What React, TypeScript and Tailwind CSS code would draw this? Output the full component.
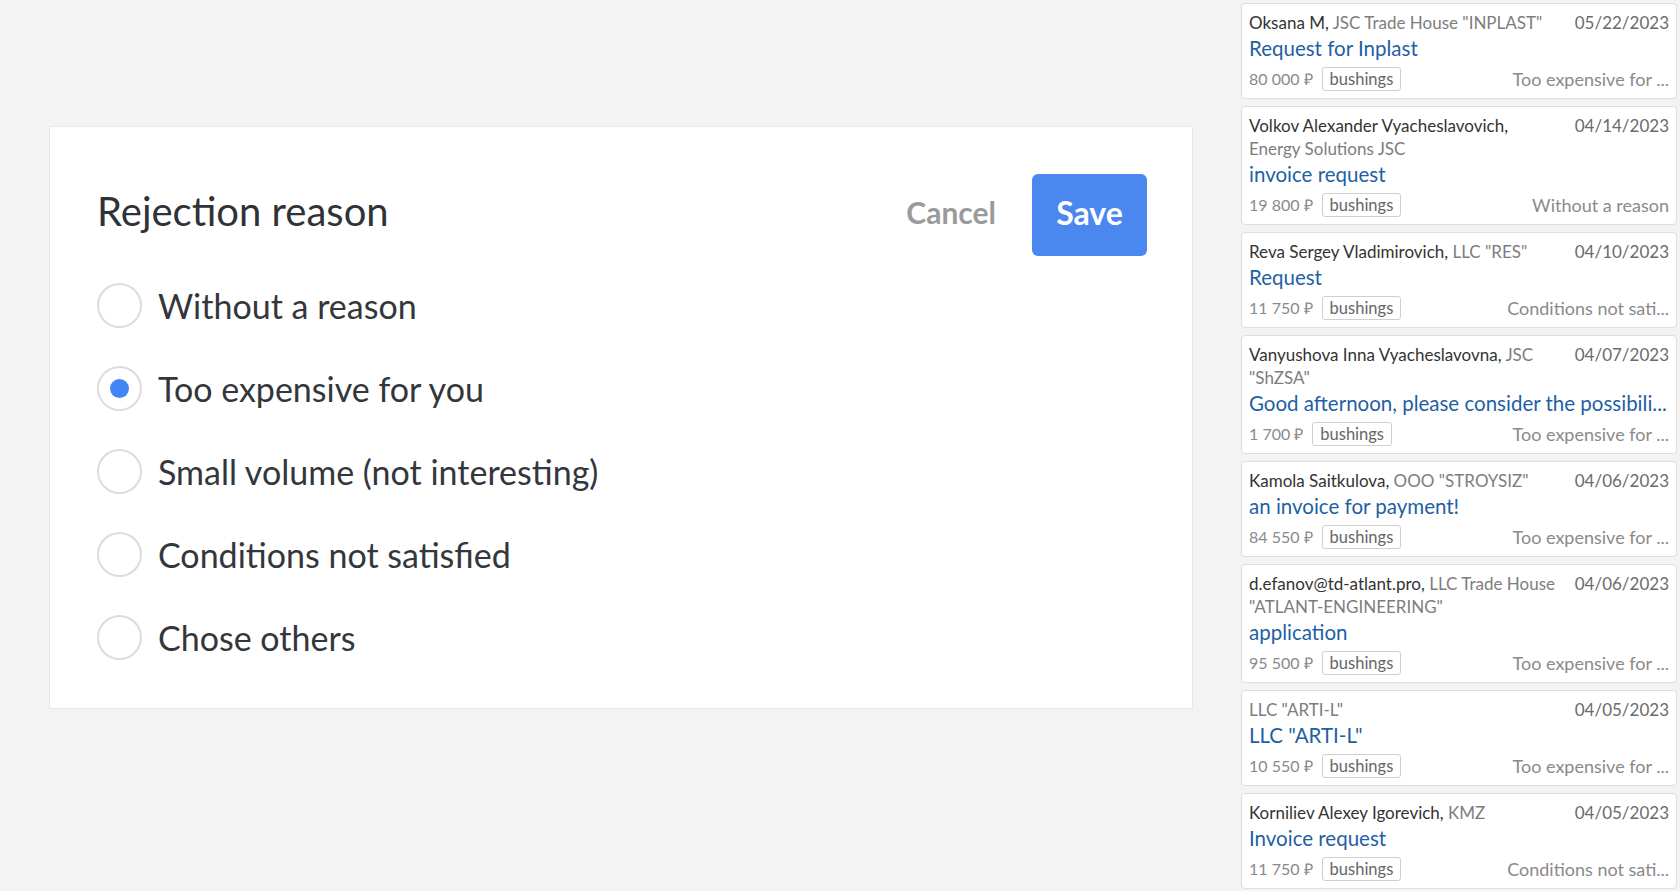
import React from "react";

type Deal = {
  name?: string;
  company: string;
  line2?: string;
  date: string;
  title: string;
  price: string;
  reason: string;
};

const deals: Deal[] = [
  { name: "Oksana M,", company: 'JSC Trade House "INPLAST"', date: "05/22/2023", title: "Request for Inplast", price: "80 000 ₽", reason: "Too expensive for ..." },
  { name: "Volkov Alexander Vyacheslavovich,", company: "", line2: "Energy Solutions JSC", date: "04/14/2023", title: "invoice request", price: "19 800 ₽", reason: "Without a reason" },
  { name: "Reva Sergey Vladimirovich,", company: 'LLC "RES"', date: "04/10/2023", title: "Request", price: "11 750 ₽", reason: "Conditions not sati..." },
  { name: "Vanyushova Inna Vyacheslavovna,", company: "JSC", line2: '"ShZSA"', date: "04/07/2023", title: "Good afternoon, please consider the possibili...", price: "1 700 ₽", reason: "Too expensive for ..." },
  { name: "Kamola Saitkulova,", company: 'OOO "STROYSIZ"', date: "04/06/2023", title: "an invoice for payment!", price: "84 550 ₽", reason: "Too expensive for ..." },
  { name: "d.efanov@td-atlant.pro,", company: "LLC Trade House", line2: '"ATLANT-ENGINEERING"', date: "04/06/2023", title: "application", price: "95 500 ₽", reason: "Too expensive for ..." },
  { company: 'LLC "ARTI-L"', date: "04/05/2023", title: 'LLC "ARTI-L"', price: "10 550 ₽", reason: "Too expensive for ..." },
  { name: "Korniliev Alexey Igorevich,", company: "KMZ", date: "04/05/2023", title: "Invoice request", price: "11 750 ₽", reason: "Conditions not sati..." },
];

const reasons = [
  "Without a reason",
  "Too expensive for you",
  "Small volume (not interesting)",
  "Conditions not satisfied",
  "Chose others",
];

function DealCard({ d }: { d: Deal }) {
  return (
    <div className="shrink-0 rounded-[4px] border border-[#dedede] bg-white px-[7px] pt-[7px] pb-[7px]">
      <div className="flex items-start justify-between gap-[8px]">
        <div className="min-w-0 flex-1 text-[17px] leading-[23px]">
          <div className="whitespace-nowrap">
            {d.name && <span className="text-[#333333]">{d.name}</span>}
            {d.name && d.company && " "}
            {d.company && <span className="text-[#7d7d7d]">{d.company}</span>}
          </div>
          {d.line2 && <div className="whitespace-nowrap text-[#7d7d7d]">{d.line2}</div>}
        </div>
        <div className="shrink-0 text-[17px] leading-[23px] text-[#6b6b6b]">{d.date}</div>
      </div>
      <div className="mt-[1px] overflow-hidden whitespace-nowrap text-[20.5px] leading-[26px] text-[#1f5fa3]">{d.title}</div>
      <div className="mt-[6px] flex h-[24px] items-center">
        <span className="text-[16px] text-[#8a8a8a]">{d.price}</span>
        <span className="ml-[9px] flex h-[24px] items-center rounded-[3px] border border-[#cfcfcf] px-[7px] text-[16.5px] text-[#666666]">
          bushings
        </span>
        <span className="ml-auto whitespace-nowrap pl-[8px] text-[18px] text-[#8a8a8a]">{d.reason}</span>
      </div>
    </div>
  );
}

export default function App() {
  const selected = 1;
  return (
    <div className="flex h-[891px] w-[1680px] overflow-hidden bg-[#f3f3f3] font-['Lato',sans-serif]">
      <div className="flex-1 pl-[49px] pr-[48px] pt-[126px]">
        <div className="border border-[#e8e8e8] bg-white pl-[47px] pr-[45px] pt-[47px] pb-[29px]">
          <div className="flex h-[82px] items-center justify-between">
            <h2 className="pb-[9px] text-[40px] leading-none text-[#2f3338]">Rejection reason</h2>
            <div className="flex items-center gap-[36px]">
              <button className="pb-[6px] text-[30px] font-bold text-[#9a9a9a]">Cancel</button>
              <button className="h-[82px] w-[115px] rounded-[6px] bg-[#4a87ee] pb-[4px] text-[32px] font-bold text-white">
                Save
              </button>
            </div>
          </div>
          <div className="mt-[8px] flex flex-col">
            {reasons.map((r, i) => (
              <label key={r} className="flex h-[83px] items-center gap-[16px]">
                <span className="flex h-[45px] w-[45px] items-center justify-center rounded-full border-2 border-[#dcdcdc]">
                  {i === selected && <span className="h-[19px] w-[19px] rounded-full bg-[#4285f4]" />}
                </span>
                <span className="text-[34px] text-[#33373c]">{r}</span>
              </label>
            ))}
          </div>
        </div>
      </div>
      <div className="mr-[3px] flex w-[436px] flex-col gap-[7px] pt-[3px]">
        {deals.map((d, i) => (
          <DealCard key={i} d={d} />
        ))}
      </div>
    </div>
  );
}
